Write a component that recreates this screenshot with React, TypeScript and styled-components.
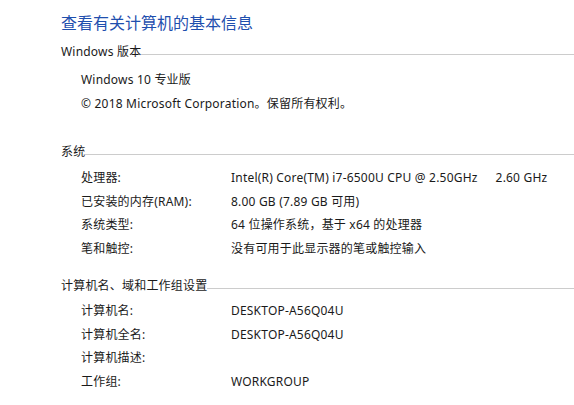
import React from "react";
import styled, { createGlobalStyle } from "styled-components";

const GlobalStyle = createGlobalStyle`
  html, body {
    margin: 0;
    padding: 0;
    background: #ffffff;
  }
  body {
    font-family: "Noto Sans", "Noto Sans CJK SC", sans-serif;
    color: #1a1a1a;
  }
`;

const Page = styled.div`
  width: 574px;
  height: 405px;
  box-sizing: border-box;
  padding: 9px 0 0 61px;
  overflow: hidden;
  background: #ffffff;
`;

const Title = styled.h1`
  margin: 0;
  font-family: "Noto Sans CJK SC", "Noto Sans", sans-serif;
  font-weight: 400;
  font-size: 16px;
  line-height: 26px;
  height: 26px;
  color: #1f4fae;
`;

const Section = styled.section<{ $top: number; $gap: number }>`
  margin-top: ${(p) => p.$top}px;
  display: flex;
  flex-direction: column;
  gap: ${(p) => p.$gap}px;
`;

const Header = styled.div`
  display: flex;
  align-items: center;
  height: 24px;
  font-size: 12px;
  line-height: 24px;
`;

const HeaderLabel = styled.span`
  white-space: nowrap;
  letter-spacing: 0.2px;
`;

const HeaderRule = styled.div`
  flex: 1;
  height: 1px;
  background: #cccccc;
  margin-top: 5px;
`;

const Rows = styled.div`
  display: flex;
  flex-direction: column;
  padding-left: 20px;
  letter-spacing: 0.2px;
`;

const Row = styled.div`
  display: grid;
  grid-template-columns: 150px 1fr;
  height: 23.5px;
  align-items: center;
  font-size: 12px;
  line-height: 23.5px;
`;

const Line = styled.div`
  height: 23.5px;
  font-size: 12px;
  line-height: 23.5px;
  white-space: pre;
`;

const Label = styled.span`
  white-space: nowrap;
`;

const Value = styled.span`
  white-space: pre;
`;

const Spacer = styled.span`
  display: inline-block;
  width: 18px;
`;

type Item = [string, React.ReactNode];

const systemItems: Item[] = [
  [
    "处理器:",
    <>
      Intel(R) Core(TM) i7-6500U CPU @ 2.50GHz
      <Spacer />
      2.60 GHz
    </>,
  ],
  ["已安装的内存(RAM):", "8.00 GB (7.89 GB 可用)"],
  ["系统类型:", "64 位操作系统，基于 x64 的处理器"],
  ["笔和触控:", "没有可用于此显示器的笔或触控输入"],
];

const nameItems: Item[] = [
  ["计算机名:", "DESKTOP-A56Q04U"],
  ["计算机全名:", "DESKTOP-A56Q04U"],
  ["计算机描述:", ""],
  ["工作组:", "WORKGROUP"],
];

const SectionHeader = ({ label }: { label: string }) => (
  <Header>
    <HeaderLabel>{label}</HeaderLabel>
    <HeaderRule />
  </Header>
);

const InfoRows = ({ items }: { items: Item[] }) => (
  <Rows>
    {items.map(([k, v]) => (
      <Row key={k}>
        <Label>{k}</Label>
        <Value>{v}</Value>
      </Row>
    ))}
  </Rows>
);

export default function App() {
  return (
    <>
      <GlobalStyle />
      <Page>
        <Title>查看有关计算机的基本信息</Title>

        <Section $top={5} $gap={4}>
          <SectionHeader label="Windows 版本" />
          <Rows>
            <Line>Windows 10 专业版</Line>
            <Line>© 2018 Microsoft Corporation。保留所有权利。</Line>
          </Rows>
        </Section>

        <Section $top={25} $gap={2}>
          <SectionHeader label="系统" />
          <InfoRows items={systemItems} />
        </Section>

        <Section $top={13.5} $gap={1.5}>
          <SectionHeader label="计算机名、域和工作组设置" />
          <InfoRows items={nameItems} />
        </Section>
      </Page>
    </>
  );
}
